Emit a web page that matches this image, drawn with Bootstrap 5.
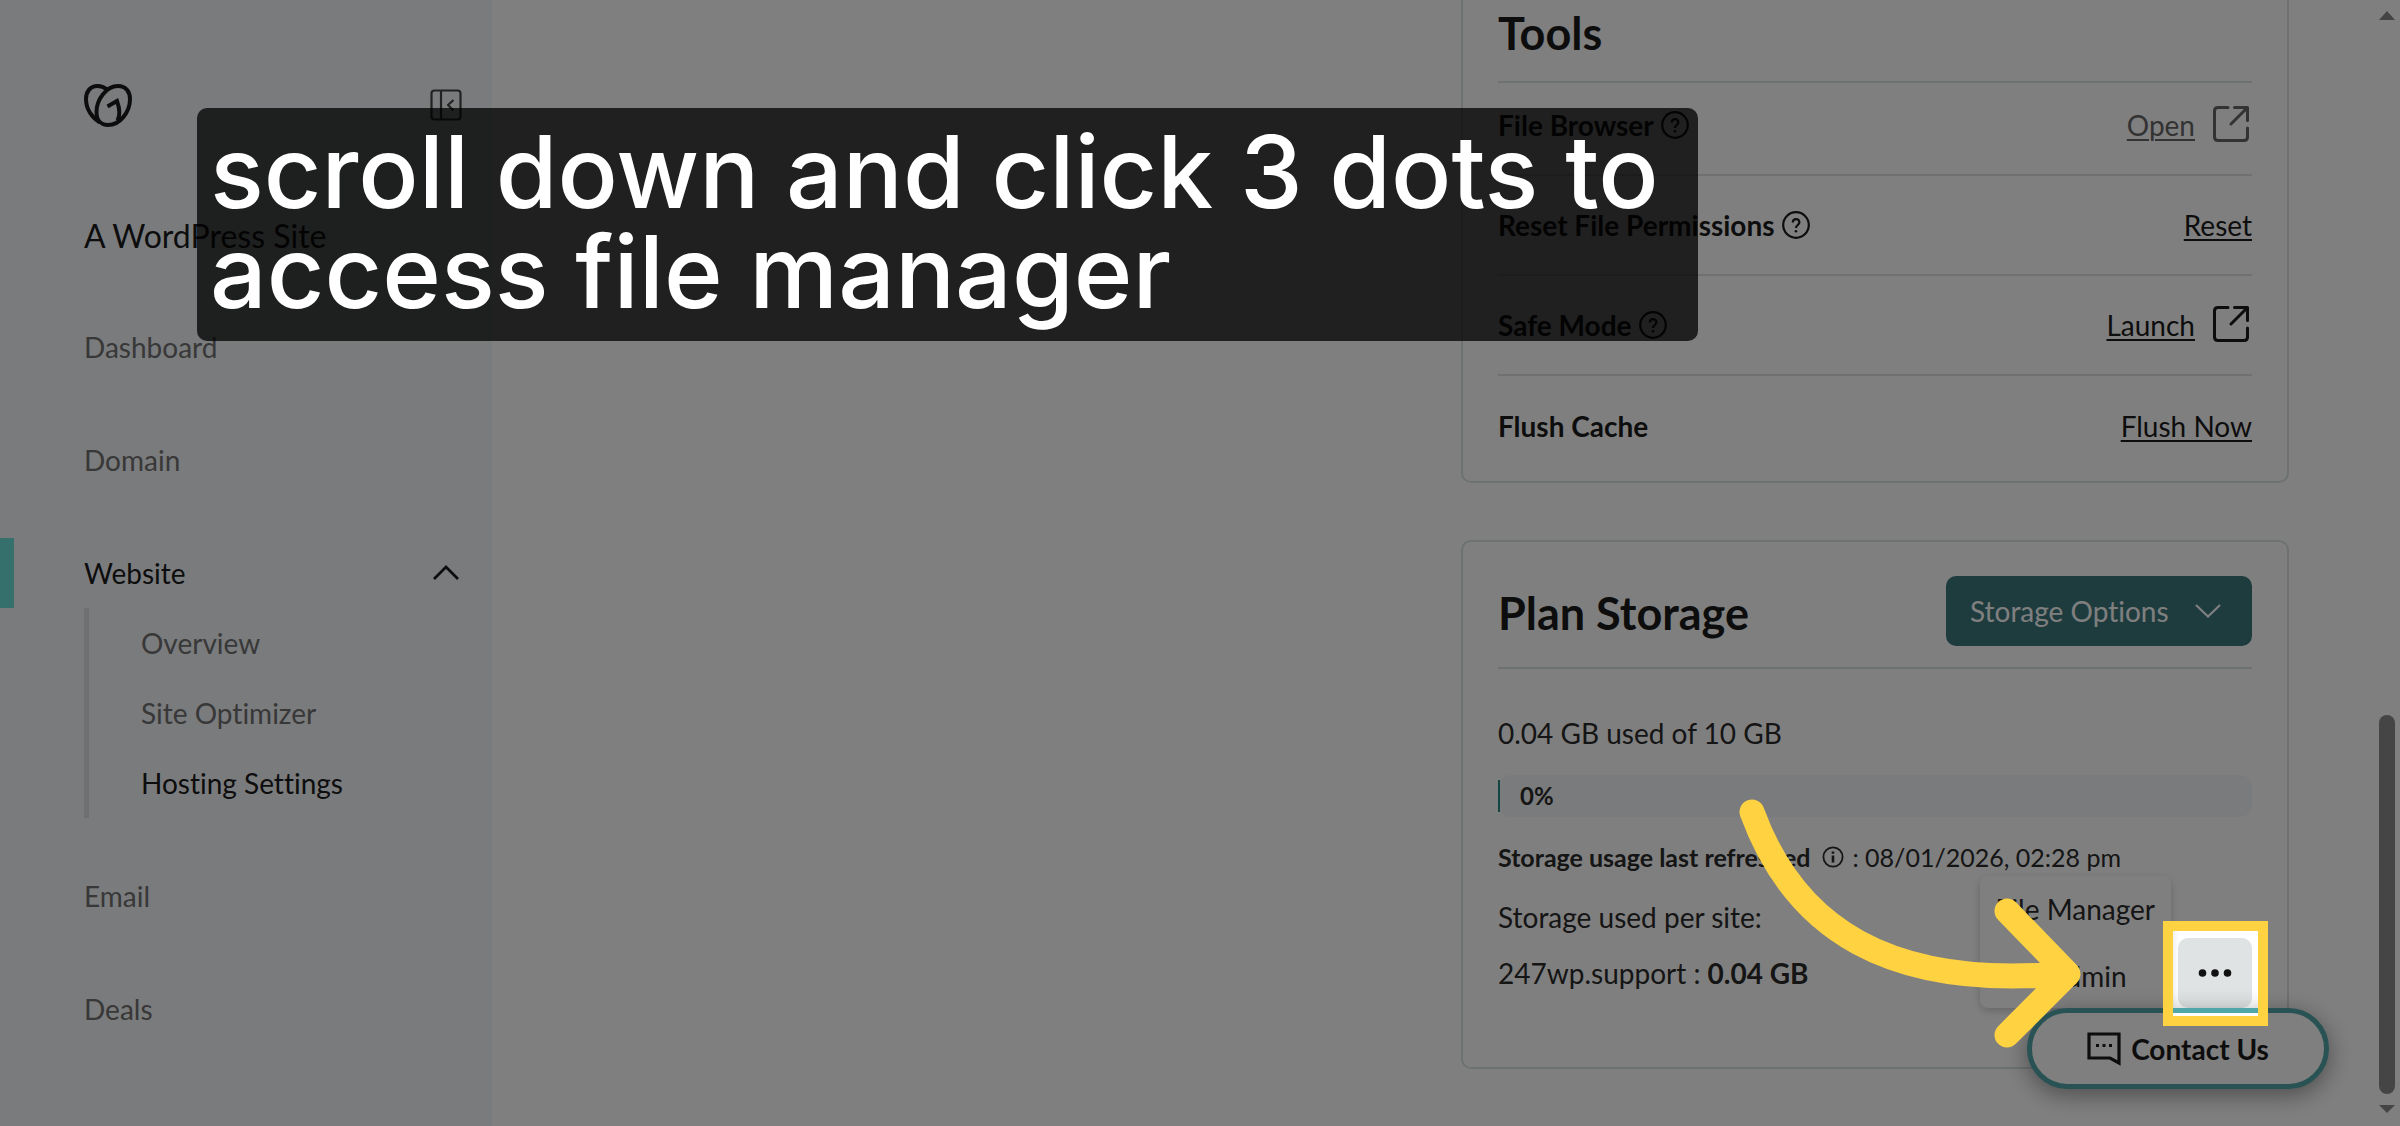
<!DOCTYPE html>
<html lang="en">
<head>
<meta charset="utf-8">
<meta name="viewport" content="width=device-width, initial-scale=1">
<title>Hosting Settings</title>
<link href="https://cdn.jsdelivr.net/npm/bootstrap@5.3.0/dist/css/bootstrap.min.css" rel="stylesheet">
<script src="https://cdn.jsdelivr.net/npm/bootstrap@5.3.0/dist/js/bootstrap.bundle.min.js" defer></script>
<style>
  :root { --ink: #1a1a1a; --muted: #707070; --teal: #50a5a8; --line: #dbe2e5; --yellow: #ffd242; }
  body { font-family: Lato, "Liberation Sans", sans-serif; font-size: 28px; line-height: 42px; color: var(--ink); overflow: hidden; }
  body, button { font-variant-ligatures: none; }
  svg { fill: none; stroke: currentColor; flex: none; display: block; }
  a { color: inherit; }

  /* sidebar */
  .side { width: 492px; background: #f5f7fa; padding: 70px 30px 0 84px; }
  .bar-row { height: 70px; }
  .icon-btn { border: 0; background: none; padding: 0; color: #444; }
  .site-name { font-size: 32px; margin: 61px 0 41px; }
  .side-nav { gap: 43px; color: var(--muted); }
  .side-nav a { text-decoration: none; }
  .side-nav .current { color: var(--ink); }
  .current-row::before { content: ""; position: absolute; left: -84px; top: 0; width: 14px; height: 70px; background: #6de0db; }
  .sub-list { border-left: 5px solid #dce0e3; padding-left: 52px; }

  /* cards */
  .content { padding-right: 87px; }
  .stack { width: 828px; gap: 57px; }
  .panel { border: 2px solid var(--line); border-radius: 10px; padding: 0 35px; }
  .tools { border-top: 0; border-top-left-radius: 0; border-top-right-radius: 0; padding-bottom: 5px; }
  .panel h2 { font-size: 45px; line-height: 66px; font-weight: 700; }
  .tools-head { height: 83px; border-bottom: 2px solid var(--line); }
  .tool-row { height: 100px; border-bottom: 2px solid #e0e0e0; }
  .tools-head + .tool-row { height: 93px; padding-bottom: 8px; }
  .tool-row:last-child { border-bottom: 0; }
  .tool-row a { text-decoration-thickness: 2px; text-underline-offset: 3px; }
  .tool-label { gap: 7px; font-weight: 700; }
  .tool-link { gap: 15px; }
  .tool-off { color: #666; }
  .storage-head { padding: 34px 0 21px; border-bottom: 2px solid var(--line); margin-bottom: 43px; }
  .btn-storage { height: 70px; width: 306px; padding: 0 30px 0 24px; border-radius: 10px; font-size: 28px; color: #fff; background: #3c787d; border: 0; }
  .btn-storage:hover { background: #2f666b; color: #fff; }
  .storage-body { color: #2b2b2b; padding-bottom: 59px; }
  .meter { height: 42px; margin: 21px 0 19px; border-radius: 12px; background: #f5f7f8; font-size: 24px; }
  .meter .progress-bar { height: 32px; width: 2px; background: #268a86; }
  .refreshed { font-size: 25px; margin-bottom: 18px; }
  .dots-btn { width: 74px; height: 70px; border: 0; border-radius: 10px; background: #dfe3e4; color: #111; padding: 0; }
  .dots-btn circle { fill: currentColor; stroke: none; }
  .pop { position: absolute; right: 81px; bottom: 0; top: auto; min-width: 191px; border: 0; border-radius: 8px; padding: 0; box-shadow: 0 3px 8px rgba(0,0,0,.2); font-size: 28px; height: 132px; }
  .pop .dropdown-item { padding: 12px 16px 13px; line-height: 42px; color: #2b2b2b; }

  /* floating help */
  .contact { position: absolute; right: 71px; bottom: 37px; width: 302px; height: 81px; border: 5px solid var(--teal); border-radius: 41px; background: #fff; color: #1a1a1a; font-weight: 700; gap: 10px; box-shadow: 0 6px 24px rgba(0,0,0,.4); z-index: 1010; }

  /* page scroller */
  .scroller { width: 24px; padding: 11px 5px 13px 3px; }
  .scroller svg { fill: #8a8a8a; stroke: none; }
  .thumb { width: 16px; height: 379px; border-radius: 8px; background: #8a8a8a; margin: auto 0 11px; }

  /* tutorial layer */
  .spot { position: absolute; left: -15px; top: -17px; width: 105px; height: 105px; border: 10px solid var(--yellow); box-shadow: 0 0 0 9999px rgba(0,0,0,.5); pointer-events: none; z-index: 1020; }
  .pointer { position: absolute; right: 152px; top: -158px; color: var(--yellow); stroke-width: 25; stroke-linecap: round; stroke-linejoin: round; pointer-events: none; z-index: 1030; }
  .caption-box { position: absolute; left: 197px; top: 108px; margin: 0; padding: 14px 39px 19px 13px; border-radius: 10px; background: rgba(0,0,0,.75); color: #fff; font: 500 100px/100px Inter, sans-serif; z-index: 1040; }
</style>
</head>
<body>
<div class="d-flex vh-100">
  <aside class="side flex-shrink-0">
    <div class="bar-row d-flex align-items-center justify-content-between">
      <a href="#" aria-label="Home">
        <svg width="48" height="43" viewBox="0 0 48 43" stroke-width="4" stroke-linejoin="round">
          <path d="M24 41C17 41 12.500 36 12.500 28C12.500 16 22 2 34 2C42 2 46 8 46 15C46 28 36 41 24 41Z"/>
          <path d="M23 5.500C20 3 17 2 13.500 2C6 2 2 8 2 15C2 25 8 34 16 38.500"/>
          <path d="M23.500 22.500L33 17C35.500 24 36.500 31 33.500 36.500" stroke-linejoin="miter"/>
        </svg>
      </a>
      <button class="icon-btn" aria-label="Collapse menu">
        <svg width="32" height="32" viewBox="0 0 32 32" stroke-width="2.200" stroke-linejoin="round"><rect x="1.500" y="1.500" width="29" height="29" rx="3"/><path d="M11 1.500V30.500M23.500 11L18 16L23.500 21.500"/></svg>
      </button>
    </div>
    <div class="site-name bar-row d-flex align-items-center">A WordPress Site</div>
    <nav class="side-nav d-flex flex-column">
      <a class="bar-row d-flex align-items-center" href="#">Dashboard</a>
      <a class="bar-row d-flex align-items-center" href="#">Domain</a>
      <div>
        <a class="current current-row position-relative bar-row d-flex align-items-center justify-content-between" href="#">Website
          <svg width="32" height="20" viewBox="0 0 32 20" stroke-width="2.800"><path d="M4 16L16 4L28 16"/></svg>
        </a>
        <div class="sub-list">
          <a class="bar-row d-flex align-items-center" href="#">Overview</a>
          <a class="bar-row d-flex align-items-center" href="#">Site Optimizer</a>
          <a class="current bar-row d-flex align-items-center" href="#">Hosting Settings</a>
        </div>
      </div>
      <a class="bar-row d-flex align-items-center" href="#">Email</a>
      <a class="bar-row d-flex align-items-center" href="#">Deals</a>
    </nav>
  </aside>

  <main class="content flex-grow-1 d-flex justify-content-end">
    <div class="stack d-flex flex-column">
      <section class="panel tools">
        <header class="tools-head"><h2 class="m-0">Tools</h2></header>
        <div class="tool-row d-flex align-items-center justify-content-between">
          <span class="tool-label d-flex align-items-center">File Browser
            <svg width="28" height="28" viewBox="0 0 28 28" stroke-width="2.200"><circle cx="14" cy="14" r="12.800"/><path d="M10.800 11.500C10.800 7 17.400 7 17.400 11.300C17.400 14 14 14 14 17"/><circle cx="14" cy="20.200" r="1.300" fill="currentColor" stroke="none"/></svg></span>
          <span class="tool-link tool-off d-flex align-items-center"><a href="#">Open</a>
            <svg width="42" height="42" viewBox="0 0 42 42" stroke-width="3" stroke-linecap="round" stroke-linejoin="round"><path d="M18 3.500H8C5.500 3.500 4.500 4.500 4.500 7V33C4.500 35.500 5.500 36.500 8 36.500H34C36.500 36.500 37.500 35.500 37.500 33V24M24.500 3.500H37.500V16.500M37.500 3.500L21 20"/></svg></span>
        </div>
        <div class="tool-row d-flex align-items-center justify-content-between">
          <span class="tool-label d-flex align-items-center">Reset File Permissions
            <svg width="28" height="28" viewBox="0 0 28 28" stroke-width="2.200"><circle cx="14" cy="14" r="12.800"/><path d="M10.800 11.500C10.800 7 17.400 7 17.400 11.300C17.400 14 14 14 14 17"/><circle cx="14" cy="20.200" r="1.300" fill="currentColor" stroke="none"/></svg></span>
          <a href="#">Reset</a>
        </div>
        <div class="tool-row d-flex align-items-center justify-content-between">
          <span class="tool-label d-flex align-items-center">Safe Mode
            <svg width="28" height="28" viewBox="0 0 28 28" stroke-width="2.200"><circle cx="14" cy="14" r="12.800"/><path d="M10.800 11.500C10.800 7 17.400 7 17.400 11.300C17.400 14 14 14 14 17"/><circle cx="14" cy="20.200" r="1.300" fill="currentColor" stroke="none"/></svg></span>
          <span class="tool-link d-flex align-items-center"><a href="#">Launch</a>
            <svg width="42" height="42" viewBox="0 0 42 42" stroke-width="3" stroke-linecap="round" stroke-linejoin="round"><path d="M18 3.500H8C5.500 3.500 4.500 4.500 4.500 7V33C4.500 35.500 5.500 36.500 8 36.500H34C36.500 36.500 37.500 35.500 37.500 33V24M24.500 3.500H37.500V16.500M37.500 3.500L21 20"/></svg></span>
        </div>
        <div class="tool-row d-flex align-items-center justify-content-between">
          <span class="tool-label">Flush Cache</span>
          <a href="#">Flush Now</a>
        </div>
      </section>

      <section class="panel">
        <header class="storage-head d-flex align-items-center justify-content-between">
          <h2 class="m-0 pt-1">Plan Storage</h2>
          <button class="btn btn-storage d-flex align-items-center justify-content-between">Storage Options
            <svg width="28" height="18" viewBox="0 0 28 18" stroke-width="2.200"><path d="M2 3L14 14.500L26 3"/></svg>
          </button>
        </header>
        <div class="storage-body">
          <p class="m-0">0.04 GB used of 10 GB</p>
          <div class="meter d-flex align-items-center" role="progressbar" aria-label="Storage used" aria-valuenow="0" aria-valuemin="0" aria-valuemax="100">
            <div class="progress-bar"></div><b class="ps-3 ms-1">0%</b>
          </div>
          <p class="refreshed d-flex align-items-center gap-2"><b>Storage usage last refreshed</b>
            <svg class="ms-1" width="22" height="22" viewBox="0 0 22 22" stroke-width="1.800"><circle cx="11" cy="11" r="9.600"/><path d="M11 9.500V16.500M11 5.500V7.800" stroke-width="2.600"/></svg>
            <span>: 08/01/2026, 02:28 pm</span></p>
          <p class="m-0">Storage used per site:</p>
          <div class="d-flex align-items-center justify-content-between">
            <span>247wp.support : <b>0.04 GB</b></span>
            <div class="position-relative">
              <button class="dots-btn d-flex align-items-center justify-content-center" aria-label="More actions">
                <svg width="34" height="10" viewBox="0 0 34 10"><circle cx="4.500" cy="5" r="3.800"/><circle cx="17" cy="5" r="3.800"/><circle cx="29.500" cy="5" r="3.800"/></svg>
              </button>
              <div class="dropdown-menu pop show">
                <a class="dropdown-item" href="#">File Manager</a>
                <a class="dropdown-item" href="#">WP Admin</a>
              </div>
              <div class="spot"></div>
              <svg class="pointer" width="380" height="280" viewBox="1720 780 380 280"><path d="M1752 812C1795 930 1890 988 2060 974M2007 911L2068 974L2007 1035"/></svg>
            </div>
          </div>
        </div>
      </section>
    </div>
  </main>

  <div class="scroller d-flex flex-column" aria-hidden="true">
    <svg width="16" height="9" viewBox="0 0 16 9"><path d="M8 0L16 9H0Z"/></svg>
    <div class="thumb"></div>
    <svg width="16" height="8" viewBox="0 0 16 8"><path d="M0 0H16L8 8Z"/></svg>
  </div>
</div>

<button class="contact d-flex align-items-center justify-content-center">
  <svg width="34" height="34" viewBox="0 0 34 34" stroke-width="3.200"><path d="M2 2H32V31L23 26H2Z"/><path d="M9 13.500H12M15.500 13.500H18.500M22 13.500H25" stroke-width="3"/></svg>
  Contact Us
</button>

<p class="caption-box">scroll down and click 3 dots to<br>access file manager</p>
</body>
</html>
